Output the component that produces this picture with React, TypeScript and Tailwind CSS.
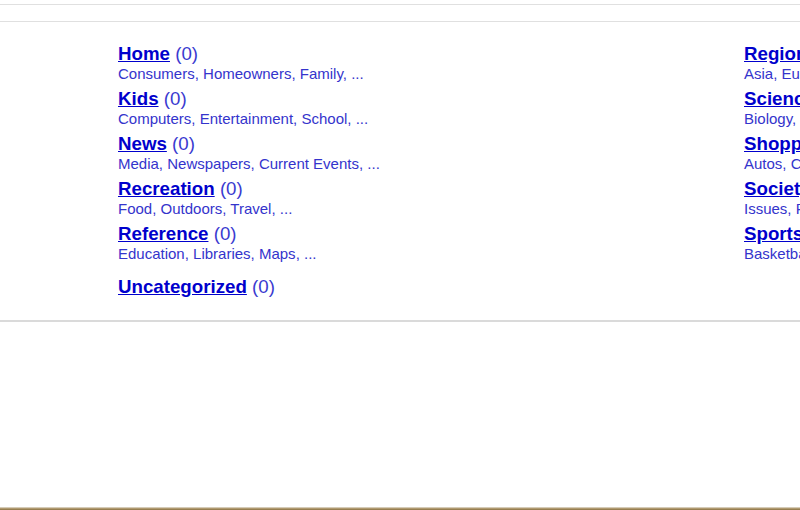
type Category = {
  name: string;
  count: number;
  subs?: string[];
};

const LEFT: Category[] = [
  { name: 'Home', count: 0, subs: ['Consumers', 'Homeowners', 'Family'] },
  { name: 'Kids', count: 0, subs: ['Computers', 'Entertainment', 'School'] },
  { name: 'News', count: 0, subs: ['Media', 'Newspapers', 'Current Events'] },
  { name: 'Recreation', count: 0, subs: ['Food', 'Outdoors', 'Travel'] },
  { name: 'Reference', count: 0, subs: ['Education', 'Libraries', 'Maps'] },
];

const RIGHT: Category[] = [
  { name: 'Regional', count: 0, subs: ['Asia', 'Europe', 'North America'] },
  { name: 'Science', count: 0, subs: ['Biology', 'Psychology', 'Physics'] },
  { name: 'Shopping', count: 0, subs: ['Autos', 'Clothing', 'Gifts'] },
  { name: 'Society', count: 0, subs: ['Issues', 'People', 'Religion'] },
  { name: 'Sports', count: 0, subs: ['Basketball', 'Football', 'Soccer'] },
];

function CategoryItem({ cat }: { cat: Category }) {
  return (
    <div className="mb-[5px] whitespace-nowrap">
      <div className="text-[18.72px] leading-[20px]">
        <a href="#" className="font-bold text-[#0000cc] underline">
          {cat.name}
        </a>{' '}
        <span className="text-[#3a3ad0]">({cat.count})</span>
      </div>
      {cat.subs && (
        <div className="text-[15px] leading-[20px] text-[#3434cc]">
          {cat.subs.map((s) => (
            <span key={s}>
              <a href="#">{s}</a>,{' '}
            </span>
          ))}
          ...
        </div>
      )}
    </div>
  );
}

export default function App() {
  return (
    <div
      className="flex h-[510px] w-[800px] flex-col overflow-hidden bg-white"
      style={{ fontFamily: '"Liberation Sans", Arial, sans-serif' }}
    >
      <div className="mt-[4px] h-[18px] border-t border-b border-[#e0e0e0]" />

      <div className="flex border-b-2 border-[#dadada] pl-[118px] pt-[22px] pb-[23px]">
        <div className="w-[626px] shrink-0">
          {LEFT.map((c) => (
            <CategoryItem key={c.name} cat={c} />
          ))}
          <div className="mt-[13px] whitespace-nowrap text-[18.72px] leading-[20px]">
            <a href="#" className="font-bold text-[#0000cc] underline">
              Uncategorized
            </a>{' '}
            <span className="text-[#3a3ad0]">(0)</span>
          </div>
        </div>
        <div className="shrink-0">
          {RIGHT.map((c) => (
            <CategoryItem key={c.name} cat={c} />
          ))}
        </div>
      </div>

      <div className="mt-auto h-[3px] bg-gradient-to-b from-[#e8e4dc] via-[#b09a70] to-[#8a7040]" />
    </div>
  );
}
